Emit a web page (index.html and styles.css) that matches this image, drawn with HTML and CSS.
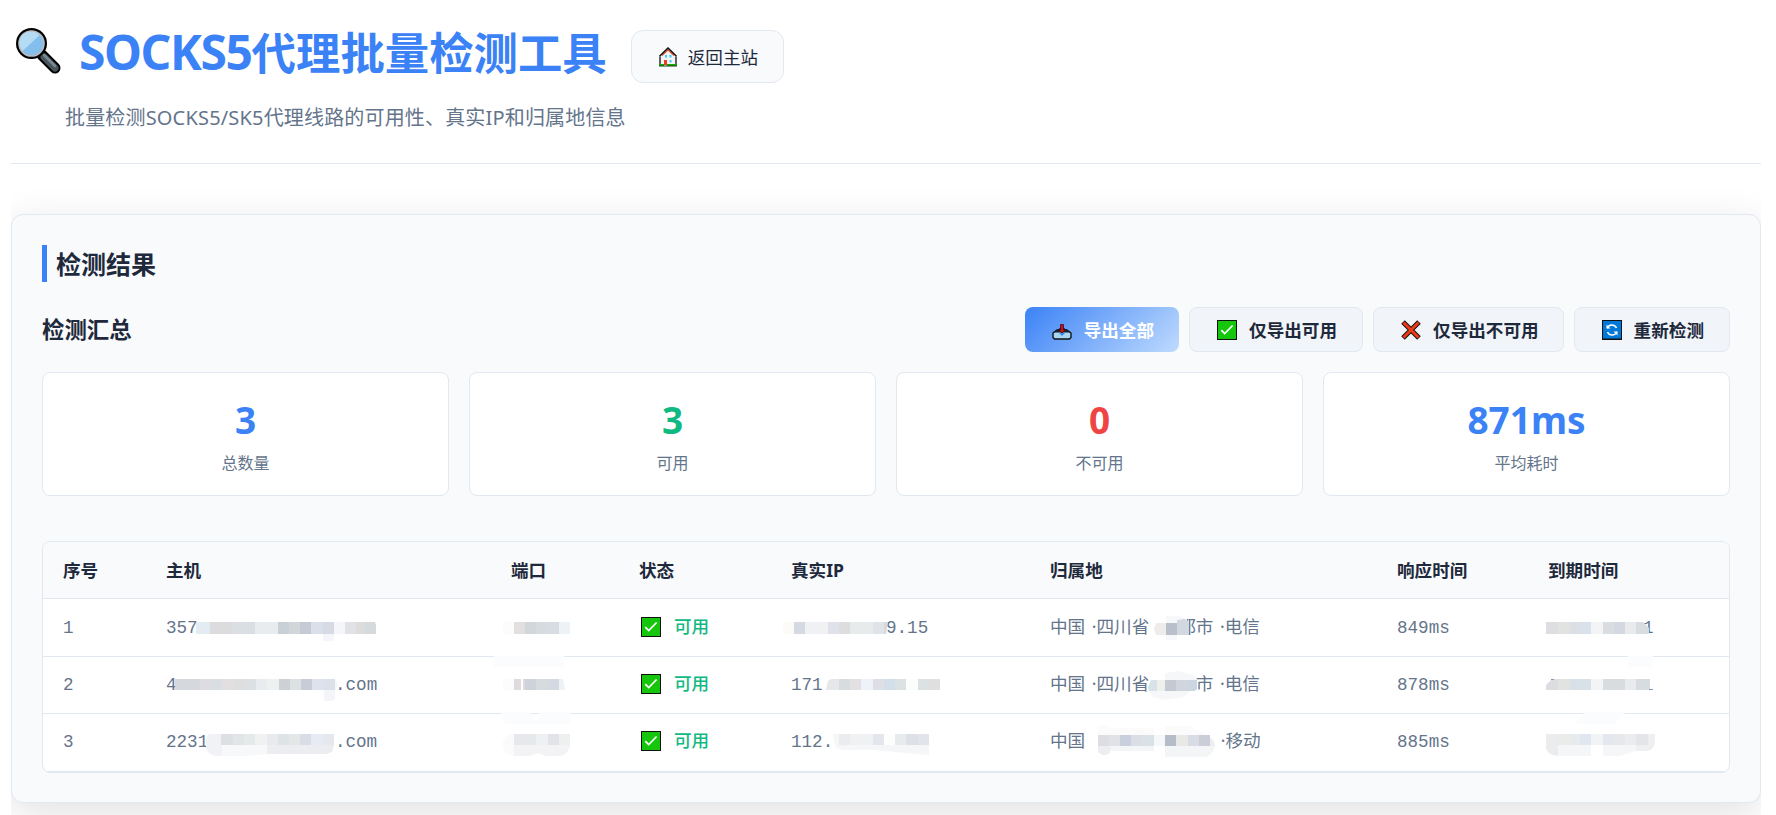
FILE: index.html
```
<!DOCTYPE html>
<html lang="zh-CN">
  <head>
    <meta charset="UTF-8" />
    <title>SOCKS5代理批量检测工具</title>
    <link rel="stylesheet" href="styles.css">
  </head>
  <body>
    <!-- 公用图标 -->
    <svg class="defs" width="0" height="0">
      <symbol id="check" viewBox="0 0 20 20">
        <path d="M0 0h20v20H0z" fill="#111" />
        <path d="M1 1h18v18H1z" fill="#16c60c" />
        <path d="M4.3 10.2l3.4 3.3 7.9-8" fill="none" stroke="#fff" stroke-width="1.7" />
      </symbol>
    </svg>

    <header class="header">
      <div class="title-row">
        <svg class="logo" width="46" height="47" viewBox="0 0 46 47">
          <path d="M26 28l13 13" stroke="#000" stroke-width="11" stroke-linecap="round" />
          <path d="M24 26l5 5" stroke="#9aa0a4" stroke-width="3" />
          <path d="M28 30l11 11" stroke="#48555c" stroke-width="7" stroke-linecap="round" />
          <path d="M28 28l11 11" stroke="#7b8a92" stroke-width="2.5" stroke-linecap="round" />
          <circle cx="15.5" cy="16.5" r="15.5" fill="#000" />
          <circle cx="15.5" cy="16.5" r="13.3" fill="#b8bcc0" />
          <circle cx="15.5" cy="16.5" r="11.6" fill="#83beec" />
          <path d="M6.5 24A11.6 11.6 0 0 1 23.5 8.200z" fill="#b4dcf5" />
        </svg>
        <h1><span>SOCKS5</span>代理批量检测工具</h1>
        <a class="home" href="#">
          <svg width="18" height="20" viewBox="0 0 18 20">
            <path d="M1.500 9L9 1.500 16.500 9v9h-15z" fill="#f3f3f3" />
            <path d="M1 9.500V19M17 9.500V19" stroke="#111" stroke-width="1.300" />
            <path d="M3 8.500L9 2.800l6 5.700" fill="none" stroke="#e8401c" stroke-width="1.200" />
            <path d="M.5 9.200L9 1l8.500 8.200" fill="none" stroke="#111" stroke-width="1.500" />
            <path d="M6 8h2v2.500H6zM10.500 8h2v2.500h-2zM10.500 13h2v2.500h-2z" fill="#31d2f7" />
            <path d="M5 13h3v5H5z" fill="#e8401c" />
            <path d="M0 17h5v2H0zM8 17h10v2H8z" fill="#16a60c" />
            <path d="M0 19h18" stroke="#12400e" />
          </svg>
          返回主站
        </a>
      </div>
      <p class="subtitle">批量检测SOCKS5/SK5代理线路的可用性、真实IP和归属地信息</p>
    </header>

    <section class="card">
      <h2>检测结果</h2>
      <div class="toolbar">
        <h3>检测汇总</h3>
        <div class="actions">
          <button class="btn primary">
            <svg width="20" height="20" viewBox="0 0 20 20">
              <path d="M1 13l4-3h10l4 3v4.500L17.500 19h-15L1 17.500z" fill="#a9d5f2" stroke="#111" stroke-width="1.400" stroke-linejoin="round" />
              <path d="M1 12.500L8 8h4l7 4.500z" fill="#16222e" />
              <path d="M3 13h14v4.500H3z" fill="#a9d5f2" />
              <path d="M7 13h6l-3 3z" fill="#3390e0" />
              <path d="M8.500 4.500h3V10h1.800L10 13 6.700 10h1.800z" fill="#c50f1f" stroke="#400" stroke-width=".7" />
            </svg>
            导出全部
          </button>
          <button class="btn">
            <svg width="20" height="20"><use href="#check" /></svg>
            仅导出可用
          </button>
          <button class="btn narrow">
            <svg width="20" height="20" viewBox="0 0 20 20">
              <path d="M2 2l16 16M18 2L2 18" stroke="#111" stroke-width="5" />
              <path d="M2.500 2.500l15 15M17.500 2.500l-15 15" stroke="#f03a17" stroke-width="3" />
            </svg>
            仅导出不可用
          </button>
          <button class="btn">
            <svg width="20" height="20" viewBox="0 0 20 20">
              <path d="M0 0h20v20H0z" fill="#111" />
              <path d="M1 1h18v17.500H1z" fill="#0078d7" />
              <path d="M5.200 8.200A5 5 0 0 1 14.500 8M14.800 11.800A5 5 0 0 1 5.500 12" fill="none" stroke="#fff" stroke-width="1.500" />
              <path d="M4.500 4.500v4h4zM15.500 15.500v-4h-4z" fill="#fff" />
            </svg>
            重新检测
          </button>
        </div>
      </div>

      <div class="stats">
        <div class="stat"><b>3</b><span>总数量</span></div>
        <div class="stat ok"><b>3</b><span>可用</span></div>
        <div class="stat bad"><b>0</b><span>不可用</span></div>
        <div class="stat"><b>871ms</b><span>平均耗时</span></div>
      </div>

      <div class="table-wrap">
        <table>
          <colgroup>
            <col class="c-no"><col class="c-host"><col class="c-port"><col class="c-state">
            <col class="c-ip"><col class="c-area"><col class="c-time"><col>
          </colgroup>
          <thead>
            <tr>
              <th>序号</th>
              <th>主机</th>
              <th>端口</th>
              <th>状态</th>
              <th>真实IP</th>
              <th>归属地</th>
              <th>响应时间</th>
              <th>到期时间</th>
            </tr>
          </thead>
          <tbody>
            <tr>
              <td>1</td>
              <td>357<svg class="mask" width="179" height="12">
                <path fill="#e3ebf3" d="M-2 1h14v12h-14z" />
                <path fill="#dcdcdf" d="M12 1h22v12h-22z" />
                <path fill="#dadfe3" d="M34 1h23v12h-23z" />
                <path fill="#e8ecee" d="M57 1h23v12h-23z" />
                <path fill="#cad1d6" d="M80 1h11v12h-11z" />
                <path fill="#d3d6d9" d="M91 1h11v12h-11z" />
                <path fill="#c6cad6" d="M102 1h11v12h-11z" />
                <path fill="#d9e0e9" d="M113 1h12v12h-12z" />
                <path fill="#d5dae4" d="M125 1h11v12h-11z" />
                <path fill="#f5f6fa" d="M125 13h11v7h-11zM136 1h11v12h-11z" />
                <path fill="#e1e2e6" d="M147 1h11v12h-11z" />
                <path fill="#dcdcdc" d="M158 1h9v12h-9z" />
                <path fill="#d5dadd" d="M167 1h10l1 3v9h-11z" />
              </svg></td>
              <td><svg class="mask" width="60" height="12">
                <path fill="#fcfcfc" d="M-8 1h11v12h-11z" />
                <path fill="#e2dfe0" d="M3 1h11v12h-11z" />
                <path fill="#d2d7da" d="M14 1h11v12h-11z" />
                <path fill="#d7dbdf" d="M25 1h12v12h-12z" />
                <path fill="#d8dce5" d="M37 1h11v12h-11z" />
                <path fill="#edf2f6" d="M48 1h11v12h-11z" />
                <path fill="#fbfcfe" d="M-17 35h70v11h-70z" />
              </svg></td>
              <td class="state"><svg width="20" height="20"><use href="#check" /></svg>可用</td>
              <td><svg class="mask" width="95" height="12">
                <path fill="#fcfbf9" d="M-8 1h11v12h-11z" />
                <path fill="#d5dae2" d="M3 1h11v12h-11z" />
                <path fill="#f0f1f2" d="M14 1h23v12h-23z" />
                <path fill="#dfe2eb" d="M37 1h11v12h-11z" />
                <path fill="#dddde0" d="M48 1h11v12h-11z" />
                <path fill="#e7ebec" d="M59 1h23v12h-23z" />
                <path fill="#e0e3e8" d="M82 1h11v12h-11z" />
                <path fill="#d8d8dd" d="M93 1h4l-2 12h-2z" />
              </svg>9.15</td>
              <td class="area">中国 ·四川省<svg class="mask" width="29" height="12">
                <path fill="#f7f8f9" d="M17 -6h14l7 4v3h-21zM17 13h11v5h-11z" />
                <path fill="#eeedec" d="M7 1h10v12h-10l-2-6z" />
                <path fill="#b9c0cc" d="M17 1h11v12h-11z" />
                <path fill="#d2d8e0" d="M28 -2l8-1 4 4v12h-12z" />
              </svg>都市 ·电信</td>
              <td>849ms</td>
              <td><svg class="mask" width="95" height="12">
                <path fill="#dddee1" d="M-2 1h12v12h-12z" />
                <path fill="#e1e3e1" d="M10 1h12v12h-12z" />
                <path fill="#dce0e4" d="M22 1h10v12h-10z" />
                <path fill="#d9e1ea" d="M32 1h11v12h-11z" />
                <path fill="#f2f4f6" d="M43 1h12v12h-12z" />
                <path fill="#dadde0" d="M55 1h11v12h-11z" />
                <path fill="#d4d8e1" d="M66 1h11v12h-11z" />
                <path fill="#e9eaec" d="M77 1h11v12h-11z" />
                <path fill="#dadde0" d="M88 1h7l6 6v6h-13z" />
                <path fill="#fbfcfe" d="M80 35h25v11h-25z" />
              </svg>1</td>
            </tr>
            <tr>
              <td>2</td>
              <td>4<svg class="mask" width="158.400" height="12">
                <path fill="#d5d9dd" d="M-2 1h25v11h-25z" />
                <path fill="#dddde1" d="M23 1h11v11h-11z" />
                <path fill="#d9dee2" d="M34 1h11v11h-11z" />
                <path fill="#e3dfe1" d="M45 1h12v11h-12z" />
                <path fill="#dddedd" d="M57 1h11v11h-11z" />
                <path fill="#dae0e4" d="M68 1h11v11h-11z" />
                <path fill="#e8ecf0" d="M79 1h11v11h-11z" />
                <path fill="#edf1f0" d="M90 1h12v11h-12z" />
                <path fill="#cdd1d6" d="M102 1h11v11h-11z" />
                <path fill="#dce1e3" d="M113 1h11v11h-11z" />
                <path fill="#c9ccd7" d="M124 1h11v11h-11z" />
                <path fill="#dee2ec" d="M135 1h12v11h-12z" />
                <path fill="#dae1e9" d="M147 1h11v11h-11z" />
                <path fill="#f4f5f8" d="M147 12h11v9l-3 2h-8zM158 1l3 6-3 5z" />
              </svg>.com</td>
              <td><svg class="mask" width="60" height="12">
                <path fill="#fcfcfc" d="M-8 1h11v11h-11z" />
                <path fill="#dedadd" d="M3 1h7v11h-7zM12 1h2v11h-2z" />
                <path fill="#ced2db" d="M14 1h11v11h-11z" />
                <path fill="#d6dbde" d="M25 1h12v11h-12z" />
                <path fill="#d3d8e1" d="M37 1h11v11h-11z" />
                <path fill="#edf2f6" d="M48 1h4l2 11h-6z" />
                <path fill="#fbfcfe" d="M-10 34h30v2l5 7 3-3v-6h31v12h-65z" />
              </svg></td>
              <td class="state"><svg width="20" height="20"><use href="#check" /></svg>可用</td>
              <td>171<svg class="mask" width="117" height="12">
                <path fill="#e6e7e9" d="M3 12l2-9 3-2h9v11z" />
                <path fill="#d7dcdf" d="M16 1h11v11h-11z" />
                <path fill="#e3e0e3" d="M27 1h11v11h-11z" />
                <path fill="#edf3f8" d="M38 1h12v11h-12z" />
                <path fill="#dddfe5" d="M50 1h11v11h-11z" />
                <path fill="#d2dee9" d="M61 1h11v11h-11z" />
                <path fill="#dce1e4" d="M72 1h11v11h-11z" />
                <path fill="#fbfdfc" d="M83 1h12v11h-12z" />
                <path fill="#dce1e4" d="M95 1h11v11h-11z" />
                <path fill="#dedfde" d="M106 1h11v11h-11z" />
              </svg></td>
              <td class="area">中国 ·四川省<svg class="mask" width="46.600" height="12">
                <path fill="#f6f7f9" d="M16 -6l14-2 14 4 5 6H16zM1 12h40l-6 6-19 3-12-3z" />
                <path fill="#d9e1e9" d="M2 1h6v11H0l-1-4z" />
                <path fill="#efefee" d="M8 1h8v11h-8z" />
                <path fill="#c5c9d3" d="M16 1h11v11h-11z" />
                <path fill="#d0d5de" d="M27 1h12v11h-12z" />
                <path fill="#cbd6e2" d="M39 1h9v9l-2 2h-7z" />
              </svg>市 ·电信</td>
              <td>878ms</td>
              <td><svg class="mask" width="106" height="12">
                <path fill="#dcdde1" d="M-2 7l6-6h6v11h-12z" />
                <path fill="#e1e3e1" d="M10 1h12v11h-12z" />
                <path fill="#d9e1e8" d="M22 1h21v11h-21z" />
                <path fill="#f2f4f6" d="M43 1h12v11h-12z" />
                <path fill="#d9dcdf" d="M55 1h22v11h-22z" />
                <path fill="#e9eaed" d="M77 1h11v11h-11z" />
                <path fill="#d7dce0" d="M88 1h14v11h-14z" />
                <path fill="#8799b1" d="M101 11h4v1h-4zM3 1h3v1h-3z" />
                <path fill="#fbfcfe" d="M37 34h41l-11 12h-41z" />
              </svg></td>
            </tr>
            <tr>
              <td>3</td>
              <td>2231<svg class="mask" width="126.700" height="12">
                <path fill="#f1f2f5" d="M-2 3l3-4h13v22h-5q-9-1-11-8z" />
                <path fill="#dedfe3" d="M13 -1h12v11h-12z" />
                <path fill="#e1e5e8" d="M25 -1h11v11h-11z" />
                <path fill="#e4e9e9" d="M36 -1h11v11h-11z" />
                <path fill="#f0f1f1" d="M47 -1h12v11h-12z" />
                <path fill="#e8eaed" d="M59 -1h11v11h-11z" />
                <path fill="#dee3e5" d="M70 -1h11v11h-11z" />
                <path fill="#e3e7e8" d="M81 -1h11v11h-11z" />
                <path fill="#dadde6" d="M92 -1h11v11h-11z" />
                <path fill="#e6ebf5" d="M103 -1h12v11h-12z" />
                <path fill="#e5e8ee" d="M115 -1h11v11h-11z" />
                <path fill="#f7f8f9" d="M14 10h45v9l-20 2h-25z" />
                <path fill="#ebedf0" d="M59 10h67l-2 7-6 2h-59z" />
              </svg>.com</td>
              <td><svg class="mask" width="60" height="12">
                <path fill="#fafafa" d="M3 -1v22q-11-2-11-12t11-10z" />
                <path fill="#e7e8eb" d="M3 -1h22v11h-22z" />
                <path fill="#edf1f1" d="M25 -1h12v11h-12z" />
                <path fill="#e2e3e8" d="M37 -1h11v11h-11z" />
                <path fill="#eeefef" d="M48 -1h11v11h-11z" />
                <path fill="#f3f3f5" d="M3 10h56q-1 9-10 11h-14l-8-3-8 3h-16z" />
              </svg></td>
              <td class="state"><svg width="20" height="20"><use href="#check" /></svg>可用</td>
              <td>112.<svg class="mask" width="96" height="12">
                <path fill="#f6f6f6" d="M0 -1h6v16q-6-5-6-16z" />
                <path fill="#ebecf0" d="M6 -1h11v11h-11z" />
                <path fill="#f0f1f2" d="M17 -1h23v11h-23z" />
                <path fill="#e3e6ec" d="M40 -1h11v11h-11z" />
                <path fill="#fcfdfd" d="M51 -1h11v11h-11z" />
                <path fill="#e7ebed" d="M62 -1h11v11h-11z" />
                <path fill="#dde0e6" d="M73 -1h12v11h-12z" />
                <path fill="#e3e4e9" d="M85 -1h11v11h-11z" />
                <path fill="#f5f6f8" d="M3 10h93v10l-23-2-33-3h-31z" />
              </svg></td>
              <td class="area">中国<svg class="mask" width="129" height="12">
                <path fill="#fbfbfb" d="M13 -10h11l1 2h44v7H13zM80 -10h23l20 9H80z" />
                <path fill="#dcdee1" d="M13 -1h11v11h-11z" />
                <path fill="#e0e2e7" d="M24 -1h11v11h-11z" />
                <path fill="#c9cfdd" d="M35 -1h11v11h-11z" />
                <path fill="#dbdfe5" d="M46 -1h11v11h-11z" />
                <path fill="#dae2e5" d="M57 -1h12v11h-12z" />
                <path fill="#f5f8f8" d="M69 -1h11v11h-11z" />
                <path fill="#b5bdc9" d="M80 -1h11v11h-11z" />
                <path fill="#e8e8e7" d="M91 -1h12v11h-12z" />
                <path fill="#d8dce5" d="M103 -1h11v11h-11z" />
                <path fill="#cbced8" d="M114 -1h11v11h-11z" />
                <path fill="#edeef0" d="M125 2q5 2 5 8h-5zM13 10h12v7l-4 2h-4l-4-3z" />
                <path fill="#f4f5f7" d="M25 10h44v5H25zM80 10h50q-2 9-9 11H80z" />
              </svg> ·移动</td>
              <td>885ms</td>
              <td><svg class="mask" width="106" height="12">
                <path fill="#ebecee" d="M-2 -1h12v22q-10-1-12-7z" />
                <path fill="#eaecea" d="M10 -1h12v11h-12z" />
                <path fill="#e8ebee" d="M22 -1h10v11h-10z" />
                <path fill="#e1e7f0" d="M32 -1h11v11h-11z" />
                <path fill="#f1f3f5" d="M43 -1h12v11h-12z" />
                <path fill="#e4e7ed" d="M55 -1h11v11h-11z" />
                <path fill="#e6e8ea" d="M66 -1h11v11h-11z" />
                <path fill="#ebecef" d="M77 -1h11v11h-11z" />
                <path fill="#e3e5e8" d="M88 -1h12v11h-12z" />
                <path fill="#eeeff0" d="M100 -1h7v9q-2 8-9 8h-10v-6h12z" />
                <path fill="#f5f6f8" d="M10 10h33v11h-33zM55 10h33v6l-16 5h-17z" />
              </svg></td>
            </tr>
          </tbody>
        </table>
      </div>
    </section>
  </body>
</html>
```
FILE: styles.css
```
* {
  box-sizing: border-box;
}

body {
  min-height: 815px;
  margin: 0 15px 0 11px;
  background: #fff;
  color: #1e293b;
  font-family: "Noto Sans", "Noto Sans CJK SC", sans-serif;
  font-size: 17.6px;
}

h1,
h2,
h3,
p {
  margin: 0;
}

.defs {
  position: absolute;
}

/* 头部 */
.header {
  height: 164px;
  padding-top: 24px;
  border-bottom: 1px solid #e2e8f0;
}

.title-row {
  display: flex;
  align-items: center;
  height: 60px;
}

.logo {
  margin: 0 17px 8px 5px;
}

h1 {
  margin-top: -3px;
  color: #3b82f6;
  font-size: 44.4px;
  line-height: 58px;
  white-space: nowrap;
}

h1 span {
  font-size: 48px;
  letter-spacing: -1.4px;
}

.home {
  display: flex;
  align-items: center;
  gap: 11px;
  width: 153px;
  height: 53px;
  margin: 5px 0 0 24px;
  padding-left: 27px;
  background: #f8fafc;
  border: 1px solid #e2e8f0;
  border-radius: 12px;
  color: #1e293b;
  text-decoration: none;
  white-space: nowrap;
}

.subtitle {
  margin: 20px 0 0 54px;
  color: #64748b;
  font-size: 20px;
  letter-spacing: 0.17px;
  line-height: 28px;
}

/* 结果卡片 */
.card {
  height: 589px;
  margin-top: 50px;
  padding: 30px;
  background: #f8fafc;
  border: 1px solid #e2e8f0;
  border-radius: 12px;
  box-shadow: 0 10px 40px rgba(0, 0, 0, 0.12);
}

h2 {
  height: 37px;
  padding-left: 9px;
  border-left: 5px solid #3b82f6;
  font-size: 25px;
  line-height: 39px;
}

.toolbar {
  display: flex;
  align-items: center;
  justify-content: space-between;
  height: 45px;
  margin: 25px 0 20px;
}

h3 {
  font-size: 22.4px;
  line-height: 32px;
}

.actions {
  display: flex;
  gap: 10px;
}

.btn {
  display: flex;
  align-items: center;
  gap: 12px;
  height: 45px;
  padding: 0 25px 0 27px;
  background: #f1f5f9;
  border: 1px solid #e2e8f0;
  border-radius: 8px;
  color: #1e293b;
  font: inherit;
  font-weight: 700;
  white-space: nowrap;
}

.btn.narrow {
  padding-right: 24px;
}

.btn.primary {
  padding: 0 25px 0 27px;
  background: linear-gradient(135deg, #3b82f6, #bfdbfe);
  border: 0;
  color: #fff;
}

/* 统计 */
.stats {
  display: grid;
  grid-template-columns: repeat(4, 1fr);
  gap: 20px;
}

.stat {
  height: 124px;
  padding-top: 22px;
  background: #fff;
  border: 1px solid #e2e8f0;
  border-radius: 8px;
  text-align: center;
}

.stat b {
  display: block;
  color: #3b82f6;
  font-size: 37px;
  line-height: 50px;
}

.stat.ok b {
  color: #10b981;
}

.stat.bad b {
  color: #ef4444;
}

.stat span {
  display: block;
  margin-top: 6px;
  color: #64748b;
  font-size: 16px;
  line-height: 24px;
}

/* 表格 */
.table-wrap {
  margin-top: 45px;
  overflow: hidden;
  background: #fff;
  border: 1px solid #e2e8f0;
  border-radius: 8px;
}

table {
  width: 100%;
  table-layout: fixed;
  border-collapse: separate;
  border-spacing: 0;
}

.c-no { width: 103px; }
.c-host { width: 345px; }
.c-port { width: 128px; }
.c-state { width: 152px; }
.c-ip { width: 259px; }
.c-area { width: 347px; }
.c-time { width: 151px; }

th,
td {
  height: 57.4px;
  padding: 0 0 0 20px;
  border-bottom: 1px solid #e2e8f0;
  text-align: left;
  line-height: 26px;
  white-space: nowrap;
}

th {
  background: #f8fafc;
}

td {
  color: #64748b;
  font-family: "Liberation Mono", "Noto Sans CJK SC", monospace;
}

td.state {
  padding-bottom: 4px;
  color: #10b981;
  font-family: "Noto Sans", "Noto Sans CJK SC", sans-serif;
  font-weight: 500;
}

.state svg {
  margin: 0 13px 0 2px;
  vertical-align: -4px;
}

td.area {
  padding-bottom: 4px;
  font-family: "Noto Sans", "Noto Sans CJK SC", sans-serif;
  word-spacing: 2px;
}

/* 打码块盖在文字上面 */
.mask {
  position: relative;
  overflow: visible;
  vertical-align: baseline;
}

.area .mask {
  vertical-align: -1px;
}
```
